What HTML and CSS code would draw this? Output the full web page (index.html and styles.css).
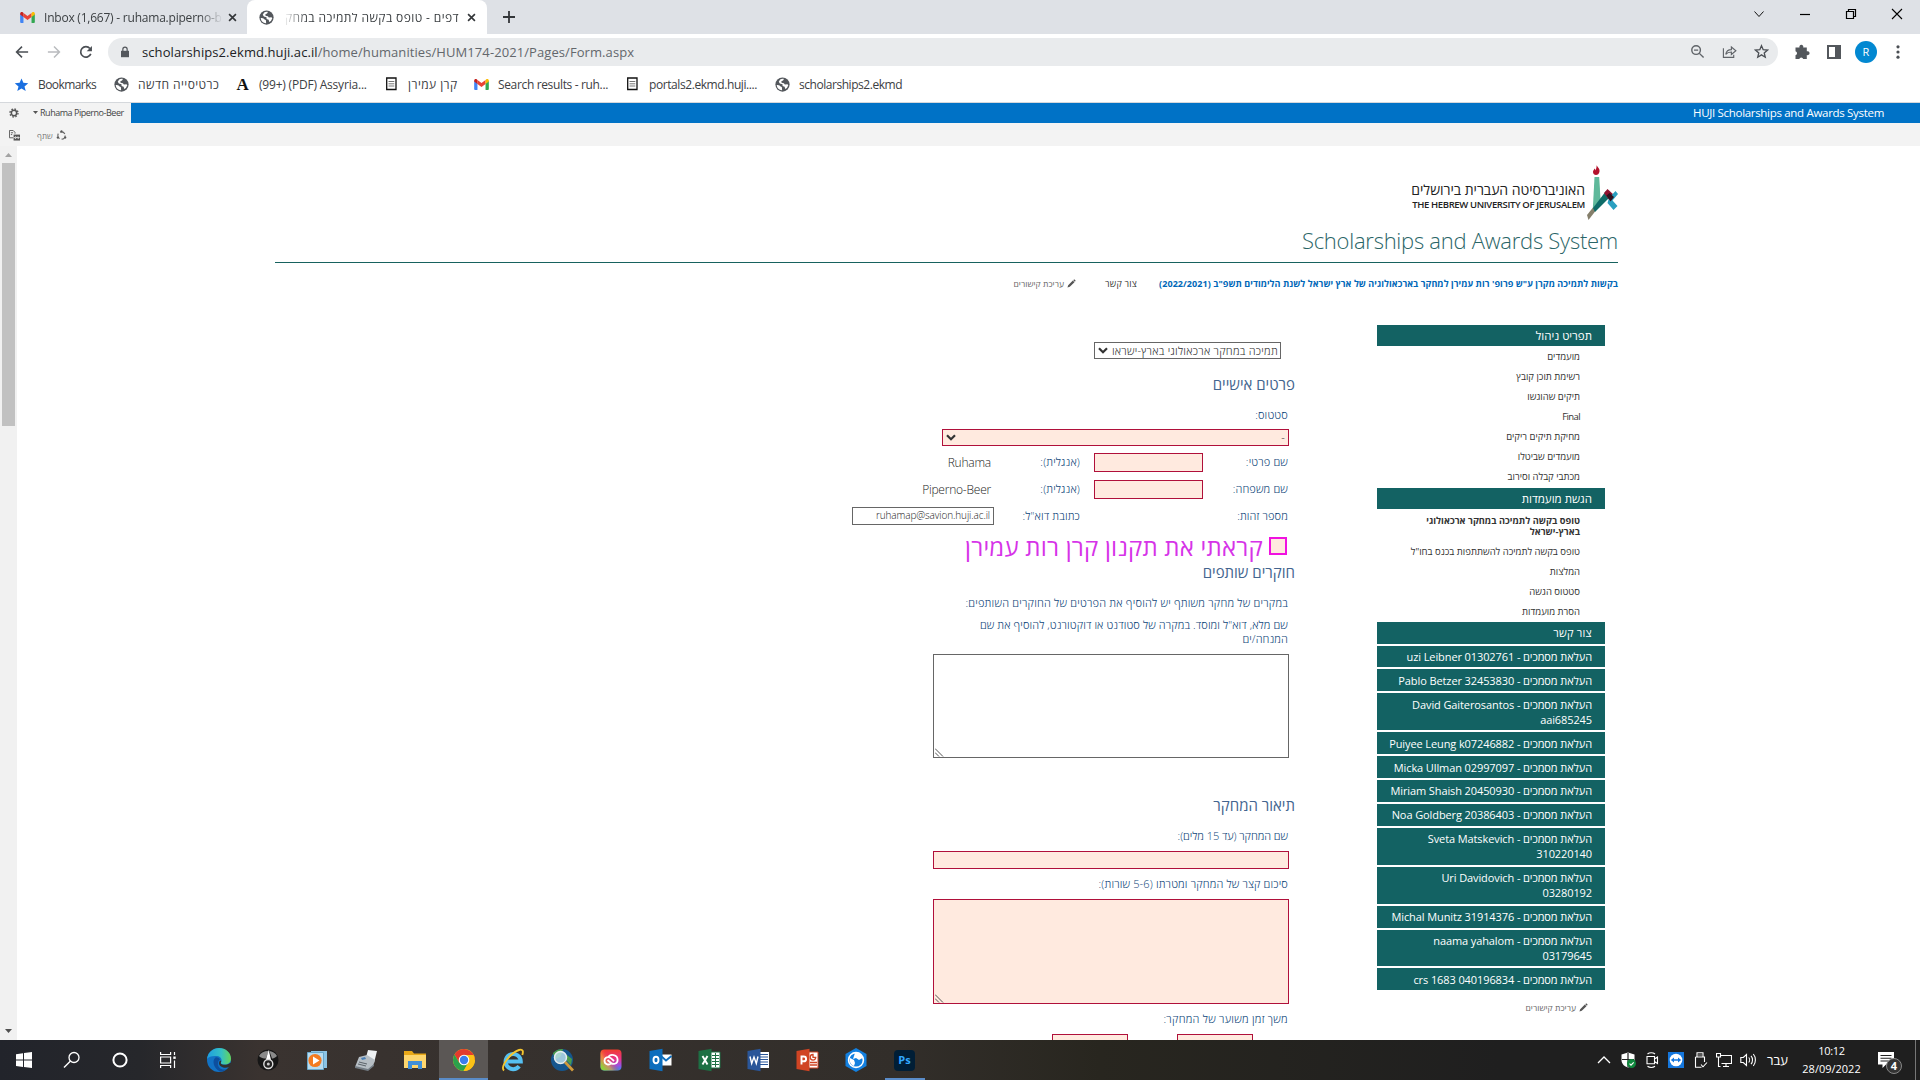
FILE: index.html
```html
<!DOCTYPE html>
<html lang="he">
<head>
<meta charset="utf-8">
<title>Scholarships and Awards System</title>
<link rel="stylesheet" href="styles.css">
</head>
<body>
<svg class="defs" width="0" height="0">
  <defs>
    <symbol id="gmail" viewBox="0 0 16 12"><path fill="#4285f4" d="M0 2v9a1 1 0 0 0 1 1h2.600V4.500z"/><path fill="#34a853" d="M16 2v9a1 1 0 0 1-1 1h-2.600V4.500z"/><path fill="#ea4335" d="M3.600 5.500V1L8 4.300 12.400 1v4.500L8 8.800z"/><path fill="#c5221f" d="M0 1.700C0 .2 1.600-.5 2.800.4l.8.6v4.500L0 2.800z"/><path fill="#fbbc04" d="M16 1.700C16 .2 14.400-.5 13.200.4l-.8.6v4.500L16 2.800z"/></symbol>
    <symbol id="globe" viewBox="0 0 16 16"><circle cx="8" cy="8" r="7.600" fill="#53575c"/><path fill="#fff" d="M1.800 8.600c1.600 0 3 .2 3.600 1 .5.900 2 .5 2 1.700 0 1 .2 1.600.2 2.800-3 .2-5.500-2-5.800-5.500zM5.500 2.600c1-.6 2.500-.9 4-.6L8.600 3.600 6.800 4.500 7 6l2.500.6 1 1.400 2.800-.2.900 1-1.500 3-1.800 1-.6-2.300-2.200-1L8 7.800 5.200 7 4 5z"/></symbol>
    <symbol id="doc" viewBox="0 0 12 14"><path fill="#fff" stroke="#111" stroke-width="1.300" d="M1.200 1h9.300v11.500H1.200z"/><path stroke="#777" stroke-width="1" d="M3 4.500h5.800M3 6.800h5.800M3 9h5.800"/></symbol>
    <symbol id="close" viewBox="0 0 10 10"><path stroke="#333639" stroke-width="1.800" d="M1.200 1.200l7.600 7.600M8.800 1.200L1.200 8.800"/></symbol>
    <symbol id="pencil" viewBox="0 0 10 10"><path fill="#555" d="M.5 9.500l.8-2.600L6.500 1.800l1.800 1.700-5.200 5.200zM7 1.300l1-.9 1.700 1.600-1 1z"/></symbol>
    <symbol id="chev" viewBox="0 0 10 7"><path fill="none" stroke="#333" stroke-width="2.200" d="M1 1.200l4 4 4-4"/></symbol>
    <symbol id="grip" viewBox="0 0 9 9"><path stroke="#555" stroke-width="1" d="M0 .5l8 8M0 4.500l4 4"/></symbol>
  </defs>
</svg>

<header class="browser">
  <div class="tabs">
    <div class="tab tab-mail"><svg class="i-mail"><use href="#gmail"/></svg><span class="tab-title fade-right">Inbox (1,667) - ruhama.piperno-b</span><svg class="i-x"><use href="#close"/></svg></div>
    <div class="tab tab-on"><svg class="i-globe"><use href="#globe"/></svg><span class="tab-title fade-left" dir="rtl">דפים - טופס בקשה לתמיכה במחק</span><svg class="i-x"><use href="#close"/></svg></div>
    <svg class="i-plus" viewBox="0 0 12 12"><path stroke="#333639" stroke-width="1.800" d="M6 0v12M0 6h12"/></svg>
    <div class="win">
      <svg viewBox="0 0 12 12"><path fill="none" stroke="#111" d="M1.500 3.500L6 8.500l4.500-5"/></svg>
      <svg viewBox="0 0 12 12"><path stroke="#000" stroke-width="1.200" d="M1 6.500h10"/></svg>
      <svg viewBox="0 0 12 12"><path fill="none" stroke="#000" stroke-width="1.200" d="M1.500 3.500h7v7h-7zM3.500 3.300V1.500h7v7H8.700"/></svg>
      <svg viewBox="0 0 12 12"><path stroke="#000" stroke-width="1.100" d="M1 1l10 10M11 1L1 11"/></svg>
    </div>
  </div>
  <div class="toolbar">
    <svg class="nav-i" viewBox="0 0 16 16"><path fill="none" stroke="#4b4f54" stroke-width="1.800" d="M15 8H2M8 1.800L1.800 8 8 14.200"/></svg>
    <svg class="nav-i" viewBox="0 0 16 16"><path fill="none" stroke="#b9bbbe" stroke-width="1.700" d="M1 8h13M8 1.800L14.200 8 8 14.200"/></svg>
    <svg class="nav-i" viewBox="0 0 16 16"><path fill="none" stroke="#4b4f54" stroke-width="1.900" d="M13.500 10.200A6 6 0 1 1 12.500 4"/><path fill="#4b4f54" d="M14.800 1v6H8.800z"/></svg>
    <div class="url">
      <svg class="i-lock" viewBox="0 0 10 13"><path fill="#53575c" d="M0 5h10v8H0z"/><path fill="none" stroke="#53575c" stroke-width="1.500" d="M2.300 5.500V3.200a2.700 2.700 0 0 1 5.400 0v2.300"/></svg>
      <span class="t"><b>scholarships2.ekmd.huji.ac.il</b>/home/humanities/HUM174-2021/Pages/Form.aspx</span>
      <div class="url-icons">
        <svg viewBox="0 0 16 16"><circle cx="6.500" cy="6.500" r="4.600" fill="none" stroke="#5f6368" stroke-width="1.500"/><path stroke="#5f6368" stroke-width="1.500" d="M4.300 6.500h4.400M10 10l4.500 4.500"/></svg>
        <svg viewBox="0 0 16 16"><path fill="none" stroke="#5f6368" stroke-width="1.200" d="M1.500 4.500v9.800h11V11.500M4 11c.6-3.500 2.800-5 6-5V3.200l4.800 4-4.800 4V8.500C7.500 8.500 5.500 9 4 11z"/></svg>
        <svg viewBox="0 0 16 16"><path fill="none" stroke="#4b4f54" stroke-width="1.400" d="M8 1.800l1.800 4.300 4.600.4-3.500 3 1.100 4.600L8 11.600l-4 2.500 1.100-4.600-3.500-3 4.600-.4z"/></svg>
      </div>
    </div>
    <div class="ext">
      <svg class="puzzle" viewBox="0 0 16 16"><path fill="#53575c" d="M1.500 3.500h4a2 2 0 1 1 3.700 0h3.600v3.800a2 2 0 1 1 0 3.700v4H9.200a2 2 0 0 0-3.900 0H1.500v-3.800a2 2 0 0 0 0-3.900z"/></svg>
      <svg viewBox="0 0 16 16"><path fill="#53575c" fill-rule="evenodd" d="M1 1h14v14H1zM3 3v10h6V3z"/></svg>
      <span class="avatar">R</span>
      <svg viewBox="0 0 16 16"><g fill="#4b4f54"><circle cx="8" cy="2.800" r="1.600"/><circle cx="8" cy="8" r="1.600"/><circle cx="8" cy="13.200" r="1.600"/></g></svg>
    </div>
  </div>
  <nav class="bookmarks">
    <a class="bm bm-1"><svg class="bi" viewBox="0 0 16 16"><path fill="#1a6fe0" d="M8 1.500l2 4.700 5.200.4-4 3.400 1.300 5L8 12.300 3.500 15l1.300-5-4-3.400 5.200-.4z"/></svg><span class="t">Bookmarks</span></a>
    <a class="bm bm-2 heb"><svg class="bi"><use href="#globe"/></svg><span class="t">כרטיסייה חדשה</span></a>
    <a class="bm bm-3"><span class="bi a-mark">A</span><span class="t" dir="ltr">(99+) (PDF) Assyria...</span></a>
    <a class="bm bm-4 heb"><svg class="bi bi-doc"><use href="#doc"/></svg><span class="t">קרן עמירן</span></a>
    <a class="bm bm-5"><svg class="bi bi-mail"><use href="#gmail"/></svg><span class="t">Search results - ruh...</span></a>
    <a class="bm bm-6"><svg class="bi bi-doc"><use href="#doc"/></svg><span class="t">portals2.ekmd.huji....</span></a>
    <a class="bm bm-7"><svg class="bi"><use href="#globe"/></svg><span class="t">scholarships2.ekmd</span></a>
  </nav>
</header>

<div class="suite">
  <div class="suite-user">
    <svg class="gear" viewBox="0 0 12 12"><circle cx="6" cy="6" r="3.200" fill="none" stroke="#555" stroke-width="1.800"/><circle cx="6" cy="6" r="4.800" fill="none" stroke="#555" stroke-width="1.600" stroke-dasharray="1.900 1.870"/></svg>
    <i class="caret"></i><span class="t">Ruhama Piperno-Beer</span>
  </div>
  <div class="suite-title"><span class="t">HUJI Scholarships and Awards System</span></div>
</div>
<div class="ribbon">
  <svg class="i-copy" viewBox="0 0 12 12"><path fill="none" stroke="#555" d="M4.500 8.500h-4v-8h4l2 2v1.500M2 3h2.500M2 5h1.500"/><path fill="#555" d="M5 5h7v6.500H5z"/><path stroke="#f3f3f3" d="M6 8.300h5M7.500 6.800L6 8.300l1.500 1.500M9.500 6.800L11 8.300 9.500 9.800"/></svg>
  <span class="t share">שתף</span>
  <svg class="i-share" viewBox="0 0 12 12"><circle cx="6" cy="6" r="4" fill="none" stroke="#666" stroke-width="1.200" stroke-dasharray="6 2.380"/><g fill="#555"><circle cx="6" cy="1.500" r="1.200"/><circle cx="1.900" cy="8.300" r="1.200"/><circle cx="10.100" cy="8.300" r="1.200"/></g></svg>
</div>

<main class="page">
  <div class="scroll"><i class="up"></i><i class="thumb"></i><i class="down"></i></div>
  <div class="content" dir="rtl">
    <div class="brand">
      <svg class="torch" viewBox="0 0 31 55"><path fill="#5fb99b" d="M7.500 12h4.700l1.600 27-8.200 9z"/><path fill="#b3122c" d="M9.500 0c.5 2 3.500 3 3 6.500-.3 2.500-2 3.500-3.500 3.500S6 9 6 7c0-1.500 1-2 1.500-3.500.8.500.8 1.500.8 2C9.300 4 9.800 2 9.500 0z"/><path fill="#857f6b" d="M0 50l6-7.500 4 1.500L1.500 55z"/><path fill="#0e6c68" d="M6 43L19 26l5.500 4.500L8 47z"/><path fill="#8f1230" d="M17 28l3.500-4 6.500 6-4 6z"/><path fill="#2a9fc0" d="M22 33l6.500-7 2.500 3-5.500 6.500 5 5.500-4 4-6-7z"/><path fill="#33121f" d="M19.500 30.500l3-2.500 4.500 4-3.500 4.500z"/></svg>
      <div class="uni"><span class="t uni-he">האוניברסיטה העברית בירושלים</span><span class="t uni-en" dir="ltr">THE HEBREW UNIVERSITY OF JERUSALEM</span></div>
    </div>
    <h1><span class="t" dir="ltr">Scholarships and Awards System</span></h1>
    <nav class="topnav">
      <a class="on"><span class="t">בקשות לתמיכה מקרן ע"ש פרופ' רות עמירן למחקר בארכאולוגיה של ארץ ישראל לשנת הלימודים תשפ"ב (2022/2021)</span></a>
      <a class="contact"><span class="t">צור קשר</span></a>
      <a class="edit"><svg><use href="#pencil"/></svg><span class="t">עריכת קישורים</span></a>
    </nav>
    <div class="cols">
      <aside class="side">
        <h2>תפריט ניהול</h2>
        <ul class="menu">
          <li>מועמדים</li>
          <li>רשימת תוכן קובץ</li>
          <li>תיקים שהוגשו</li>
          <li class="latin">Final</li>
          <li>מחיקת תיקים ריקים</li>
          <li>מועמדים שביטלו</li>
          <li>מכתבי קבלה וסירוב</li>
        </ul>
        <h2>הגשת מועמדות</h2>
        <ul class="menu menu-2">
          <li class="current">טופס בקשה לתמיכה במחקר ארכאולוגי<br>בארץ-ישראל</li>
          <li>טופס בקשה לתמיכה להשתתפות בכנס בחו"ל</li>
          <li>המלצות</li>
          <li>סטטוס הגשה</li>
          <li>הסרת מועמדות</li>
        </ul>
        <div class="links">
          <a class="short">צור קשר</a>
          <a>העלאת מסמכים - uzi Leibner 01302761</a>
          <a>העלאת מסמכים - Pablo Betzer 32453830</a>
          <a>העלאת מסמכים - David Gaiterosantos<br>aai685245</a>
          <a>העלאת מסמכים - Puiyee Leung k07246882</a>
          <a>העלאת מסמכים - Micka Ullman 02997097</a>
          <a>העלאת מסמכים - Miriam Shaish 20450930</a>
          <a>העלאת מסמכים - Noa Goldberg 20386403</a>
          <a>העלאת מסמכים - Sveta Matskevich<br>310220140</a>
          <a>העלאת מסמכים - Uri Davidovich<br>03280192</a>
          <a>העלאת מסמכים - Michal Munitz 31914376</a>
          <a>העלאת מסמכים - naama yahalom<br>03179645</a>
          <a>העלאת מסמכים - crs 1683 040196834</a>
        </div>
        <div class="edit side-edit"><svg><use href="#pencil"/></svg><span class="t">עריכת קישורים</span></div>
      </aside>
      <section class="form">
        <div class="sel sel-top"><span class="sel-text"><span class="t">תמיכה במחקר ארכאולוגי בארץ-ישראו</span></span><svg><use href="#chev"/></svg></div>
        <h3 class="h-personal">פרטים אישיים</h3>
        <p class="lb lb-status">סטטוס:</p>
        <div class="sel sel-req"><span>-</span><svg><use href="#chev"/></svg></div>
        <div class="grid">
          <span class="lb">שם פרטי:</span><i class="inp req"></i><span class="lb">(אנגלית):</span><span class="val">Ruhama</span>
          <span class="lb">שם משפחה:</span><i class="inp req"></i><span class="lb">(אנגלית):</span><span class="val">Piperno-Beer</span>
          <span class="lb">מספר זהות:</span><i></i><span class="lb">כתובת דוא"ל:</span><span class="inp mail">ruhamap@savion.huji.ac.il</span>
        </div>
        <div class="agree"><i class="check"></i><span class="t">קראתי את תקנון קרן רות עמירן</span></div>
        <h3 class="h-partners">חוקרים שותפים</h3>
        <p class="lb lb-a"><span class="t">במקרים של מחקר משותף יש להוסיף את הפרטים של החוקרים השותפים:</span></p>
        <p class="lb lb-b"><span class="t">שם מלא, דוא"ל ומוסד. במקרה של סטודנט או דוקטורנט, להוסיף את שם</span><br>המנחה/ים</p>
        <div class="area"><svg><use href="#grip"/></svg></div>
        <h3 class="h-desc">תיאור המחקר</h3>
        <p class="lb lb-c">שם המחקר (עד 15 מלים):</p>
        <i class="inp req wide"></i>
        <p class="lb lb-d">סיכום קצר של המחקר ומטרתו (5-6 שורות):</p>
        <div class="area req"><svg><use href="#grip"/></svg></div>
        <p class="lb lb-e">משך זמן משוער של המחקר:</p>
        <div class="dates"><i class="inp req"></i><i class="inp req"></i></div>
      </section>
    </div>
  </div>
</main>

<footer class="taskbar">
  <div class="sys">
    <span><svg width="16" height="16" viewBox="0 0 16 16"><path fill="#fff" d="M0 2.200L7 1.200v6.400H0zM8 1l8-1v7.600H8zM0 8.500h7v6.400l-7-1zM8 8.500h8V16l-8-1.100z"/></svg></span>
    <span><svg width="18" height="18" viewBox="0 0 18 18"><circle cx="11" cy="6.500" r="5" fill="none" stroke="#fff" stroke-width="1.300"/><path stroke="#fff" stroke-width="1.400" d="M7.500 10L1 16.500"/></svg></span>
    <span><svg width="16" height="16" viewBox="0 0 16 16"><circle cx="8" cy="8" r="6.600" fill="none" stroke="#fff" stroke-width="2"/></svg></span>
    <span><svg width="16" height="16" viewBox="0 0 16 16"><path fill="none" stroke="#fff" stroke-width="1.200" d="M.6 0v2.500h10V0M.6 5h10v6H.6zM.6 16v-2.500h10V16M14.500 0v3M14.500 8.500V16"/><path fill="#fff" d="M13.300 4.500h2.400v2.400h-2.400z"/></svg></span>
  </div>
  <div class="apps">
    <span><svg viewBox="0 0 24 24"><defs><linearGradient id="e1" x1="0" y1="0" x2="1" y2="0"><stop offset="0" stop-color="#1e9ee0"/><stop offset=".6" stop-color="#35c1c4"/><stop offset="1" stop-color="#66d457"/></linearGradient></defs><circle cx="12" cy="12" r="12" fill="#1272c4"/><path fill="url(#e1)" d="M0 11C1 4 6 0 12 0c7 0 12 5 12 10.500 0 4-3 6-6.500 6-2.500 0-4-1-3.500-2 1.500-2 .5-6-4-6.500C5.500 7.500 1.500 8.500 0 11z"/><path fill="#0d4f9e" d="M8.500 9.500C5 12 6 20 13 23.500c3 .2 5-.8 7-2.500-5 2-10-1.500-9-6.500.3-1.500 1-2.500 2-3-1-1.700-3-2.500-4.500-2z"/><path fill="#322f2c" d="M13.800 14.500c-.5 1.200 1.200 2.300 3.700 2.300 2.300 0 4.500-.6 5.700-2l1 .5-1.700 3.500C18 21 12.500 19 12 15.500c0-1.300.5-2.500 1.300-3 1 .3 1 1.200.5 2z"/></svg></span>
    <span><svg viewBox="0 0 24 24"><circle cx="12" cy="12" r="10.500" fill="#161616"/><path fill="#8a8a8a" d="M3 8a10.500 10.500 0 0 1 18 0c-2 2-4 2.500-5 2.500L13 2l-3 8.500C7 10.500 5 10 3 8z"/><path fill="#fff" d="M12.700 2l2.300 10H9.800z"/><circle cx="12.300" cy="16" r="4.500" fill="#222" stroke="#ddd" stroke-width="1.400"/><circle cx="12.300" cy="16" r="1.500" fill="#ccc"/></svg></span>
    <span><svg viewBox="0 0 24 24"><path fill="#8bc3e4" d="M6 3h16v17H6z"/><path fill="#b8dcf0" stroke="#69a8cc" d="M2.500 4.500h16v17h-16z"/><circle cx="10" cy="12.500" r="6.600" fill="#f47b20"/><path fill="#fff" d="M8 8.500l6.500 4L8 16.500z"/></svg></span>
    <span><svg viewBox="0 0 24 24"><path fill="#eef1f3" d="M14 2l9 1-3 12-9-2z"/><path fill="#b6bec4" d="M5 9l8-2 8 5-2 6-5 4-13-3z"/><path fill="#747d85" d="M1 18l13 3v2L1 20zM14 21l6-5v2l-6 5z"/><path fill="#4a7fb5" d="M7 10l4-1 1 2-4 1z"/><path stroke="#5b636a" d="M5 14l8 2M4 16l8 2"/></svg></span>
    <span><svg viewBox="0 0 24 24"><path fill="#e8a818" d="M1 3h8l2 2.500h12V9H1z"/><path fill="#fdd66e" d="M1 7h22v13H1z"/><path fill="#3f8fd8" d="M5 13h14v8h-4v-4H9v4H5z"/></svg></span>
    <span class="active"><svg viewBox="0 0 24 24"><circle cx="12" cy="12" r="11" fill="#fbc116"/><path fill="#e33b2e" d="M12 12H23A11 11 0 0 0 2.500 6.500L7.200 14.700z"/><path fill="#2ba24c" d="M2.500 6.500A11 11 0 0 0 11.500 23l4.800-8.200L7.200 14.700z"/><path fill="#fbc116" d="M21.600 7H12l4.300 7.800L11.500 23A11 11 0 0 0 21.600 7z"/><circle cx="12" cy="12" r="5.300" fill="#fff"/><circle cx="12" cy="12" r="4.200" fill="#3b7ded"/></svg></span>
    <span><svg viewBox="0 0 24 24"><path fill="none" stroke="#55c0f2" stroke-width="4" d="M5.500 13.500h14.300a7.600 7.600 0 1 0-1.600 4.800"/><path fill="none" stroke="#f5c52e" stroke-width="1.900" d="M3 22.500C-1 19 9 5 18 2c4-1.300 4.500 1.500 3.300 5"/></svg></span>
    <span><svg viewBox="0 0 24 24"><circle cx="12" cy="12" r="11" fill="#15568e"/><path fill="#4b9b4c" d="M3 5c4-4 8-4 10-4l-2 7-6 4zM17 7l5 4-1 6-4-4z"/><circle cx="10.500" cy="9.500" r="6" fill="#bfe4ef" fill-opacity=".8" stroke="#e6edf0" stroke-width="1.500"/><path stroke="#d09a3c" stroke-width="2.800" d="M15 14l8 8.500"/></svg></span>
    <span><svg viewBox="0 0 24 24"><defs><linearGradient id="c1" x1="0" y1="0" x2="0" y2="1"><stop offset="0" stop-color="#f03c2c"/><stop offset=".45" stop-color="#e8348b"/><stop offset=".75" stop-color="#a04fe0"/><stop offset="1" stop-color="#2f8ef0"/></linearGradient><linearGradient id="c2" x1="0" y1=".8" x2=".7" y2=".3"><stop offset=".05" stop-color="#8fd03a"/><stop offset=".4" stop-color="#f7a823" stop-opacity=".6"/><stop offset=".8" stop-color="#f22" stop-opacity="0"/></linearGradient></defs><rect x="1.500" y="1.500" width="21" height="21" rx="4" fill="url(#c1)"/><rect x="1.500" y="1.500" width="21" height="21" rx="4" fill="url(#c2)"/><path fill="none" stroke="#fff" stroke-width="1.800" d="M12 15.500c-1.500 1.600-6.500 1.500-6.500-2.700 0-3 2.500-4 4-3.700C11 5.500 18.700 6.200 18.600 12c-.1 4.500-5 4.500-6.600 3L8.500 12M10 9.300c1.500 0 2 .8 5 3.900"/></svg></span>
    <span><svg viewBox="0 0 24 24"><path fill="#fff" d="M13 6.500h10.500v11H13z"/><path fill="none" stroke="#0d6ebd" stroke-width="1.800" d="M13 8l5 4.500L23.500 8"/><path fill="#0d6ebd" d="M1.500 3L14.500.7v22.600L1.500 21z"/><ellipse cx="8" cy="12" rx="2.500" ry="3.200" fill="none" stroke="#fff" stroke-width="1.900"/></svg></span>
    <span><svg viewBox="0 0 24 24"><path fill="#fff" stroke="#1d7044" d="M13 4h10v16H13z"/><path stroke="#1d7044" d="M15 7.500h7M15 10.500h7M15 13.500h7M15 16.500h7M18.500 5v14"/><path fill="#1d7044" d="M1.500 3L14.500.7v22.600L1.500 21z"/><path stroke="#fff" stroke-width="1.900" d="M5.500 8l5 8.500M10.500 8l-5 8.500"/></svg></span>
    <span><svg viewBox="0 0 24 24"><path fill="#fff" d="M13 4h10v16H13z"/><path stroke="#2a5699" stroke-width="1.200" d="M14 6.500h8M14 9h8M14 11.500h8M14 14h8M14 16.500h8"/><path fill="#2a5699" d="M1.500 3L14.500.7v22.600L1.500 21z"/><path fill="none" stroke="#fff" stroke-width="1.400" d="M4 8.500l1.700 7L8 9l2.300 6.500 1.700-7"/></svg></span>
    <span><svg viewBox="0 0 24 24"><path fill="#fff" stroke="#d04423" d="M13 4h10v16H13z"/><path fill="none" stroke="#d04423" stroke-width="1.300" d="M15 14.500h7M15 17h7M18 6.500a2.800 2.800 0 1 0 2.800 2.800H18z"/><path fill="#d04423" d="M1.500 3L14.500.7v22.600L1.500 21z"/><path fill="none" stroke="#fff" stroke-width="1.900" d="M6.500 16.500v-8h2.200a2.300 2.300 0 0 1 0 4.800H6.500"/></svg></span>
    <span><svg viewBox="0 0 24 24"><path fill="#1380e0" d="M12 0l10.500 6v12L12 24 1.500 18V6z"/><circle cx="12" cy="12" r="7.400" fill="none" stroke="#fff" stroke-width="1.600"/><path fill="#fff" d="M11 5c3-1 7 2 7.500 5L15 12l-3-2-3 1 1-3zM6 10l4 2 1 3-1 3c-3-1-5-4-4-8z"/></svg></span>
    <span class="open"><b class="ps">Ps</b></span>
  </div>
  <div class="tray">
    <svg viewBox="0 0 16 16"><path fill="none" stroke="#fff" stroke-width="1.300" d="M2 11l6-6 6 6"/></svg>
    <svg viewBox="0 0 16 16"><path fill="#fff" d="M8 .5l6.500 2V8c0 4-3 6.500-6.500 7.500C4.500 14.500 1.500 12 1.500 8V2.500z"/><path stroke="#222" stroke-width="1.200" d="M8 1v14M2 7.500h12"/><circle cx="11.500" cy="11.500" r="4.500" fill="#10893e"/><path fill="none" stroke="#fff" stroke-width="1.100" d="M9.500 11.600l1.500 1.500 2.700-2.800"/></svg>
    <svg viewBox="0 0 16 16"><path fill="none" stroke="#fff" stroke-width="1.100" d="M3 4.500h7.500v7.300H3zM10.500 7L13.500 5v6.500L10.500 9.500M3.500 2c2-1.700 5.500-1.700 7.500 0M3.500 14.300c2 1.500 5.500 1.500 7.500 0"/></svg>
    <svg viewBox="0 0 16 16"><path fill="#1577dd" d="M0 0h16v16H0z"/><circle cx="8" cy="8" r="6.300" fill="#fff"/><path fill="#1577dd" d="M2.800 8L6 5.400v1.800h4V5.400L13.200 8 10 10.600V8.800H6v1.800z"/></svg>
    <svg viewBox="0 0 16 16"><path fill="none" stroke="#fff" stroke-width="1.100" d="M5 5V.8h6V5M3.500 5h9v5M3.500 5v10.300h6M9 12.500l2 2.300 4-4.300"/><path stroke="#fff" d="M7 2.500v1M9 2.500v1"/></svg>
    <svg viewBox="0 0 16 16"><path fill="none" stroke="#fff" stroke-width="1.100" d="M4.500 3.500h11v8h-10M10 11.500v3M7 14.500h6M.5 1.500h4V5h-4zM2.500 5v9.500h2"/></svg>
    <svg viewBox="0 0 16 16"><path fill="none" stroke="#fff" stroke-width="1.100" d="M.8 5.500h2.500L6.500 2.500v11l-3.200-3H.8zM8.700 5.500c1.200 1.300 1.200 3.700 0 5M11 3.800c2 2.200 2 6.200 0 8.400M13.300 2c2.800 3.200 2.800 8.800 0 12"/></svg>
    <span class="lang">עבר</span>
    <div class="clock"><span class="time">10:12</span><span>28/09/2022</span></div>
    <div class="notif"><svg viewBox="0 0 16 16"><path fill="#fff" d="M0 0h16v12.500H8L4.500 16v-3.500H0z"/><path stroke="#222" stroke-width="1.100" d="M2.500 3.500h11M2.500 6.300h11M2.500 9h8"/></svg><b>4</b></div>
    <i class="peek"></i>
  </div>
</footer>
</body>
</html>
```
FILE: styles.css
```css
* { box-sizing: border-box; }
html, body { margin: 0; height: 100%; overflow: hidden; }
body { display: flex; flex-direction: column; width: 1920px; height: 1080px; background: #fff; color: #333; font-family: "Open Sans", "Noto Sans", sans-serif; font-size: 12px; }
svg { display: block; flex: none; }
ul, p, h1, h2, h3 { margin: 0; padding: 0; font-weight: 400; }
ul { list-style: none; }
i { display: block; }
.defs { position: absolute; }
.t { white-space: nowrap; }

/* browser window */
.browser { flex: none; height: 103px; border-bottom: 1px solid #d5d8dc; color: #3c4043; }
.tabs { display: flex; align-items: center; height: 34px; background: #dee1e6; }
.tab { display: flex; align-items: center; height: 34px; }
.tab-mail { width: 247px; padding-left: 20px; }
.tab-on { width: 240px; padding-left: 12px; background: #fff; border-radius: 8px 8px 0 0; }
.i-mail { width: 15px; height: 11px; }
.i-globe { width: 15px; height: 15px; }
.tab-title { overflow: hidden; white-space: nowrap; font-size: 12px; }
.fade-right { width: 179px; margin: 0 5px 0 9px; letter-spacing: -0.22px; mask-image: linear-gradient(to left, transparent, #000 24px); }
.fade-left { width: 176px; margin: 0 8px 0 9px; letter-spacing: 0.4px; mask-image: linear-gradient(to right, transparent, #000 24px); }
.i-x { width: 9px; height: 9px; }
.i-plus { width: 12px; height: 12px; margin-left: 16px; }
.win { display: flex; gap: 34px; margin-left: auto; padding: 0 17px 6px 0; }
.win svg { width: 12px; height: 12px; }
.toolbar { display: flex; align-items: center; height: 36px; }
.nav-i { width: 14px; height: 14px; margin-left: 18px; }
.nav-i:first-child { margin-left: 15px; }
.url { display: flex; align-items: center; width: 1670px; height: 28px; margin: -1px 0 0 15px; padding: 0 9px 0 13px; border-radius: 14px; background: #e9ebed; color: #63676c; font-size: 13px; letter-spacing: 0.08px; }
.url b { color: #202124; font-weight: 400; }
.i-lock { width: 8px; height: 12px; margin-right: 13px; }
.url-icons { display: flex; gap: 17px; margin-left: auto; }
.url-icons svg { width: 15px; height: 15px; }
.ext { display: flex; align-items: center; flex: 1; padding-left: 16px; }
.ext svg { width: 16px; height: 16px; margin-right: 15px; }
.ext .puzzle { margin-right: 16px; }
.avatar { width: 22px; height: 22px; margin: 0 13px 0 -2px; border-radius: 50%; background: #0288d1; color: #fff; font-size: 11px; line-height: 22px; text-align: center; }
.ext svg:last-child { margin-right: 0; }
.bookmarks { display: flex; height: 28px; align-items: center; letter-spacing: -0.35px; }
.bm { display: flex; align-items: center; flex: none; }
.bm.heb { letter-spacing: 0.45px; }
.bm-1 { width: 99px; padding-left: 14px; letter-spacing: -0.57px; }
.bm-2 { width: 129px; padding-left: 15px; }
.bm-3 { width: 156px; padding-left: 7px; letter-spacing: -0.2px; }
.bm-4 { width: 90px; }
.bm-5 { width: 151px; }
.bm-6 { width: 150px; letter-spacing: -0.42px; }
.bm-7 { letter-spacing: -0.46px; }
.bi { width: 15px; height: 15px; margin-right: 9px; }
.bi-mail { height: 11px; }
.bi-doc { height: 14px; }
.a-mark { font: bold 17px/15px "Liberation Serif", serif; text-align: center; color: #111; }

/* site bars */
.suite { display: flex; flex: none; height: 20px; background: #0072c6; }
.suite-user { display: flex; align-items: center; width: 131px; padding: 0 0 1px 9px; background: #f3f3f3; color: #444; font-size: 9px; letter-spacing: -0.47px; }
.gear { width: 10px; height: 10px; margin-right: 14px; }
.caret { width: 5px; height: 3px; margin-right: 2px; background: #555; clip-path: polygon(0 0, 100% 0, 50% 100%); }
.suite-title { margin-left: auto; padding-right: 36px; color: #fff; font-size: 11.5px; line-height: 19px; letter-spacing: -0.31px; }
.ribbon { display: flex; align-items: center; flex: none; height: 23px; padding: 1px 0 0 9px; background: #f3f3f3; color: #777; }
.i-copy { width: 11px; height: 11px; margin-right: 17px; }
.share { font-size: 8px; }
.i-share { width: 11px; height: 11px; margin-left: 3px; }

.page { display: flex; flex: 1; min-height: 0; overflow: hidden; }
.scroll { display: flex; flex-direction: column; align-items: center; flex: none; width: 17px; background: #f1f1f1; }
.up { width: 7px; height: 4px; margin: 7px 0 6px; background: #a3a3a3; clip-path: polygon(50% 0, 100% 100%, 0 100%); }
.thumb { width: 13px; height: 263px; background: #c1c1c1; }
.down { width: 7px; height: 4px; margin: auto 0 7px; background: #505050; clip-path: polygon(0 0, 100% 0, 50% 100%); }
.content { width: 1343px; margin-left: 258px; }
.brand { display: flex; height: 75px; padding-top: 19px; }
.torch { width: 31px; height: 55px; }
.uni { display: flex; flex-direction: column; margin: 15px 2px 0 0; color: #222; }
.uni-he { font-size: 14px; font-weight: 500; line-height: 20px; letter-spacing: -0.03px; }
.uni-en { font-size: 9.5px; font-weight: 600; line-height: 10px; text-align: right; letter-spacing: -0.36px; }
h1 { height: 42px; border-bottom: 1px solid #17625f; color: #2a6567; font-size: 22px; font-weight: 300; line-height: 38px; letter-spacing: -0.26px; }
.topnav { display: flex; align-items: center; height: 40px; font-size: 9px; color: #333; }
.on { width: 459px; color: #0067b8; font-weight: 700; letter-spacing: 0.06px; }
.contact { width: 32px; margin-right: 22px; letter-spacing: 0.22px; }
.edit { display: flex; align-items: center; gap: 3px; color: #666; font-size: 8.5px; letter-spacing: 0.05px; }
.topnav .edit { margin-right: 29px; }
.edit svg { width: 9px; height: 9px; }

/* side menu */
.cols { display: flex; }
.side { width: 228px; margin: 22px 13px 0 0; }
.side h2 { height: 21px; padding-right: 13px; background: #136263; color: #fff; font-size: 11.5px; line-height: 21px; }
.menu { padding: 1.2px 25px 0 0; font-size: 9.5px; height: 142px; line-height: 19.9px; }
.latin { letter-spacing: -0.6px; }
.menu-2 { height: 112.6px; padding-top: 0; }
.current { padding: 6px 0 5px; font-size: 9.2px; font-weight: 700; line-height: 11px; letter-spacing: 0.03px; }
.links { display: flex; flex-direction: column; gap: 2px; }
.links a { padding: 3.46px 13px; background: #136263; color: #fff; font-size: 11px; line-height: 15px; letter-spacing: -0.1px; white-space: nowrap; }
.links .short { letter-spacing: 0.25px; }
.side-edit { margin: 12px 17px 0 0; }

/* application form */
.form { width: 363px; margin: 39px 82px 0 0; color: #1d4e79; }
.sel { display: flex; align-items: center; justify-content: space-between; border: 1px solid #666; color: #333; font-size: 11px; font-weight: 300; letter-spacing: 0.26px; }
.sel svg { width: 10px; height: 7px; }
.sel-text { width: 168px; overflow: hidden; }
.sel-top { width: 187px; height: 17px; margin-right: 14px; padding: 0 2px 0 3px; }
.sel-req { width: 347px; height: 17px; margin: 7px 6px 6.5px 0; padding: 0 3px; background: #ffeadf; border-color: #b0103a; color: #222; }
h3 { color: #44658f; font-size: 15px; line-height: 24px; height: 24px; }
.h-personal { margin-top: 13px; }
.lb { font-size: 11px; line-height: 14px; font-weight: 300; color: #0d4478; letter-spacing: 0.15px; }
p.lb { margin-right: 7px; }
.lb-status { margin-top: 12px; }
.inp { height: 19px; border: 1px solid #666; }
.req { background: #ffeadf; border-color: #b0103a; }
.grid { display: grid; grid-template-columns: 85px 109px 14px 86px 142px; grid-auto-rows: 19px; row-gap: 8px; align-items: center; width: 436px; margin-right: 7px; }
.grid > :nth-child(4n+3) { grid-column: 4; }
.grid > :nth-child(4n+4) { grid-column: 5; }
.val { padding-right: 3px; color: #222; font-size: 12px; font-weight: 300; letter-spacing: -0.22px; }
.mail { height: 18px; padding-right: 3px; color: #222; font-size: 10px; line-height: 15px; font-weight: 300; letter-spacing: -0.1px; }
.agree { display: flex; align-items: center; gap: 6px; width: 330px; height: 30px; margin: 5.5px 8px 0 0; color: #d633e8; font-size: 24px; letter-spacing: 0.21px; }
.check { width: 18px; height: 18px; border: 2px solid #f012e0; background: #ffeadf; }
.h-partners { margin-top: -1px; }
.lb-a { margin-top: 12px; letter-spacing: 0.21px; }
.lb-b { margin-top: 8px; margin-bottom: 8px; letter-spacing: 0.1px; }
.area { display: flex; align-items: flex-end; justify-content: flex-end; width: 356px; height: 104px; margin-right: 6px; border: 1px solid #666; }
.area svg { width: 9px; height: 9px; margin-left: 1px; }
.area.req { height: 105px; border-color: #b0103a; }
.h-desc { margin-top: 35px; }
.lb-c { margin-top: 12px; letter-spacing: -0.06px; }
.wide { width: 356px; height: 18px; margin: 8px 6px 8px 0; }
.lb-e, .area.req { margin-top: 8px; }
.lb-e { letter-spacing: 0.26px; }
.dates { display: flex; gap: 49px; margin: 8px 42px 0 0; }
.dates .inp { width: 76px; }

/* taskbar */
.taskbar { display: flex; flex: none; height: 40px; background: linear-gradient(90deg, #22242b 0, #26272b 140px, #3a3330 260px, #36312e 500px, #322e2a 900px, #28261f 1100px, #1f1f1f 1500px); }
.sys, .apps, .tray { display: flex; }
.sys span { display: flex; align-items: center; justify-content: center; width: 48px; }
.apps { margin-left: 2px; }
.apps span { display: flex; align-items: center; justify-content: center; width: 49px; }
.apps svg { width: 24px; height: 24px; }
.apps .active { background: #5b5755; box-shadow: inset 0 -2px #5a8cc8; }
.apps .open { background: linear-gradient(#5a8cc8, #5a8cc8) center bottom / 40px 2px no-repeat; }
.ps { width: 21px; height: 21px; border-radius: 4px; background: #001e36; color: #31a8ff; font-size: 11px; line-height: 20px; text-align: center; }
.tray { align-items: center; margin-left: auto; color: #fff; }
.tray > svg { width: 16px; height: 16px; margin-right: 8px; }
.lang { width: 25px; font-size: 13px; padding-left: 3px; }
.clock { display: flex; flex-direction: column; align-items: center; width: 90px; padding-right: 5px; font-size: 11px; line-height: 18px; }
.time { letter-spacing: -0.3px; }
.notif { position: relative; width: 37px; height: 16px; margin-left: -1px; }
.notif svg { width: 16px; height: 16px; }
.notif b { position: absolute; left: 8px; top: 6px; width: 16px; height: 16px; border: 1px solid #888; border-radius: 50%; background: #333; font-size: 11px; line-height: 14px; text-align: center; }
.peek { width: 5px; height: 40px; border-left: 1px solid #777; }
```
